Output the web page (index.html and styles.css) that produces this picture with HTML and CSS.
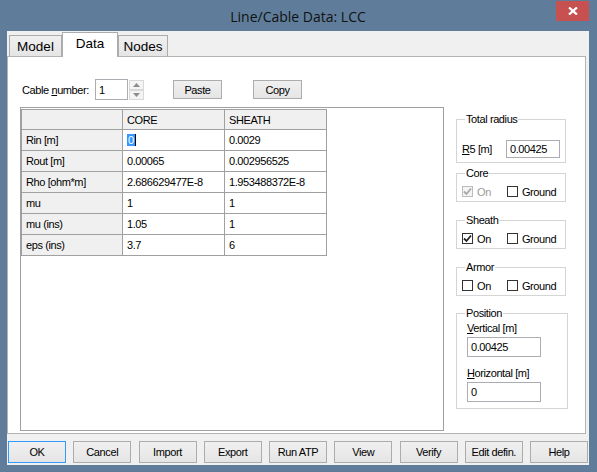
FILE: index.html
```html
<!DOCTYPE html>
<html lang="en">
<head>
    <meta charset="UTF-8">
    <title>Line/Cable Data: LCC</title>
    <link rel="stylesheet" href="styles.css">
</head>
<body>
<div class="window">
    <!-- Title bar -->
    <div class="titlebar">
        <span></span>
        <span class="title">Line/Cable Data: LCC</span>
        <button class="close-btn" aria-label="Close">
            <svg width="10" height="8" viewBox="0 0 10 8"><path d="M1 0.5 L9 7.5 M9 0.5 L1 7.5" stroke="#fff" stroke-width="2.3" fill="none"/></svg>
        </button>
    </div>

    <div class="client">
        <!-- Tabs -->
        <div class="tabs">
            <div class="tab tab-model">Model</div>
            <div class="tab tab-data active">Data</div>
            <div class="tab tab-nodes">Nodes</div>
        </div>

        <div class="tab-page">
            <div class="data-col">
                <div class="cable-row">
                    <span class="cable-label">Cable <u>n</u>umber:</span>
                    <input class="field spin-input" value="1">
                    <div class="spin-btns">
                        <span class="spin-btn"><svg width="7" height="4" viewBox="0 0 7 4"><path d="M3.5 0 L7 4 L0 4 Z" fill="#8c8c8c"/></svg></span>
                        <span class="spin-btn"><svg width="7" height="4" viewBox="0 0 7 4"><path d="M0 0 L7 0 L3.5 4 Z" fill="#8c8c8c"/></svg></span>
                    </div>
                    <button class="btn btn-paste">Paste</button>
                    <button class="btn btn-copy">Copy</button>
                </div>

                <div class="grid-frame">
                    <table class="grid">
                        <tr class="grid-head">
                            <th class="col-name"></th>
                            <th class="col-val">CORE</th>
                            <th class="col-val">SHEATH</th>
                        </tr>
                        <tr><th>Rin [m]</th><td><span class="sel">0</span></td><td>0.0029</td></tr>
                        <tr><th>Rout [m]</th><td>0.00065</td><td>0.002956525</td></tr>
                        <tr><th>Rho [ohm*m]</th><td>2.686629477E-8</td><td>1.953488372E-8</td></tr>
                        <tr><th>mu</th><td>1</td><td>1</td></tr>
                        <tr><th>mu (ins)</th><td>1.05</td><td>1</td></tr>
                        <tr><th>eps (ins)</th><td>3.7</td><td>6</td></tr>
                    </table>
                </div>
            </div>

            <div class="side-col">
                <fieldset class="group group-total">
                    <legend>Total radius</legend>
                    <div class="radius-row">
                        <span><u>R</u>5 [m]</span>
                        <input class="field radius-field" value="0.00425">
                    </div>
                </fieldset>

                <fieldset class="group group-core">
                    <legend>Core</legend>
                    <div class="check-row">
                        <span class="check disabled"><span class="box"><svg width="9" height="9" viewBox="0 0 9 9"><path d="M1 4.5 L3.5 7 L8 1.5" stroke="#a8a8a8" stroke-width="1.8" fill="none"/></svg></span>On</span>
                        <span class="check"><span class="box"></span>Ground</span>
                    </div>
                </fieldset>

                <fieldset class="group group-sheath">
                    <legend>Sheath</legend>
                    <div class="check-row">
                        <span class="check"><span class="box"><svg width="9" height="9" viewBox="0 0 9 9"><path d="M1 4.5 L3.5 7 L8 1.5" stroke="#222" stroke-width="1.8" fill="none"/></svg></span>On</span>
                        <span class="check"><span class="box"></span>Ground</span>
                    </div>
                </fieldset>

                <fieldset class="group group-armor">
                    <legend>Armor</legend>
                    <div class="check-row">
                        <span class="check"><span class="box"></span>On</span>
                        <span class="check"><span class="box"></span>Ground</span>
                    </div>
                </fieldset>

                <fieldset class="group group-position">
                    <legend>Position</legend>
                    <div class="pos-label"><u>V</u>ertical [m]</div>
                    <input class="field pos-field" value="0.00425">
                    <div class="pos-label pos-label-h"><u>H</u>orizontal [m]</div>
                    <input class="field pos-field" value="0">
                </fieldset>
            </div>
        </div>

        <!-- Dialog buttons -->
        <div class="button-bar">
            <button class="btn dlg-btn default">OK</button>
            <button class="btn dlg-btn">Cancel</button>
            <button class="btn dlg-btn">Import</button>
            <button class="btn dlg-btn">Export</button>
            <button class="btn dlg-btn">Run ATP</button>
            <button class="btn dlg-btn">View</button>
            <button class="btn dlg-btn">Verify</button>
            <button class="btn dlg-btn">Edit defin.</button>
            <button class="btn dlg-btn">Help</button>
        </div>
    </div>
</div>
</body>
</html>
```

FILE: styles.css
```css
body, html {
    margin: 0;
    padding: 0;
}

body {
    font-family: "Liberation Sans", Arial, sans-serif;
    font-size: 11px;
    letter-spacing: -0.4px;
    color: #000;
}

.window {
    width: 597px;
    height: 472px;
    box-sizing: border-box;
    padding: 0 8px 7px 7px;
    background-color: #5f7d9a;
    display: flex;
    flex-direction: column;
}

/* Title bar */
.titlebar {
    height: 31px;
    display: grid;
    grid-template-columns: 1fr auto 1fr;
    align-items: start;
}

.title {
    font-family: "Open Sans", "Noto Sans", sans-serif;
    font-size: 14px;
    letter-spacing: 0;
    line-height: 30px;
    padding-top: 2px;
    color: #111;
}

.close-btn {
    justify-self: end;
    margin-top: 1px;
    width: 33px;
    height: 20px;
    border: none;
    padding: 0;
    background-color: #c75050;
    display: flex;
    align-items: center;
    justify-content: center;
}

/* Client area */
.client {
    flex: 1;
    background-color: #f0f0f0;
    display: flex;
    flex-direction: column;
}

.tabs {
    height: 25px;
    box-sizing: border-box;
    display: flex;
    align-items: flex-end;
    padding-left: 2px;
    position: relative;
    z-index: 1;
}

.tab {
    height: 21px;
    box-sizing: border-box;
    border: 1px solid #acacac;
    border-bottom: none;
    background: linear-gradient(#f0f0f0, #e5e5e5);
    font-size: 13.5px;
    letter-spacing: 0;
    line-height: 21px;
    text-align: center;
}

.tab-model { width: 53px; }
.tab-data { width: 56px; }
.tab-nodes { width: 50px; }

.tab.active {
    height: 25px;
    margin-bottom: -1px;
    background: #fff;
    line-height: 22px;
}

.tab-page {
    width: 579px;
    height: 378px;
    box-sizing: border-box;
    border: 1px solid #b4b4b4;
    background-color: #fff;
    display: flex;
    align-items: flex-start;
    padding: 0 0 0 12px;
}

/* Left column with the grid */
.data-col {
    padding-top: 22px;
}

.cable-row {
    display: flex;
    align-items: center;
    height: 21px;
    padding-left: 2px;
}

.cable-label {
    width: 73px;
    white-space: nowrap;
}

.field {
    font: inherit;
    letter-spacing: inherit;
    box-sizing: border-box;
    border: 1px solid #abadb3;
    background: #fff;
    padding: 0 3px;
    outline: none;
    margin: 0;
}

.spin-input {
    width: 33px;
    height: 21px;
}

.spin-btns {
    display: flex;
    flex-direction: column;
    margin-left: 1px;
}

.spin-btn {
    width: 15px;
    height: 10px;
    box-sizing: border-box;
    border: 1px solid #d9d9d9;
    background: #f4f4f4;
    display: flex;
    align-items: center;
    justify-content: center;
}

.btn {
    font: inherit;
    letter-spacing: inherit;
    box-sizing: border-box;
    border: 1px solid #acacac;
    background: linear-gradient(#f0f0f0, #e5e5e5);
    padding: 0;
    margin: 0;
    color: #000;
}

.btn-paste {
    width: 49px;
    height: 19px;
    margin-left: 29px;
}

.btn-copy {
    width: 49px;
    height: 19px;
    margin-left: 31px;
}

.grid-frame {
    width: 424px;
    height: 324px;
    box-sizing: border-box;
    margin-top: 7px;
    border: 1px solid #a0a0a0;
    padding-top: 1px;
}

.grid {
    border-collapse: collapse;
    table-layout: fixed;
}

.grid th,
.grid td {
    border: 1px solid #a0a0a0;
    height: 21px;
    padding: 0 4px;
    text-align: left;
    font-weight: normal;
    white-space: nowrap;
    box-sizing: border-box;
}

.grid th {
    background-color: #f0f0f0;
}

.grid-head th {
    height: 20px;
}

.col-name { width: 101px; }
.col-val { width: 102px; }

.sel {
    background-color: #3399ff;
    color: #fff;
    padding: 0 1px;
    border-right: 1px solid #000;
}

/* Right column with group boxes */
.side-col {
    margin-left: 12px;
    padding-top: 55px;
    width: 112px;
}

.group {
    margin: 0;
    padding: 0 5px 3px 5px;
    border: 1px solid #d5d5d5;
    box-sizing: border-box;
    width: 110px;
}

.group legend {
    padding: 0 1px;
    margin-left: 3px;
    line-height: 14px;
}

.group-total { padding-top: 14px; padding-bottom: 4px; }
.group-core { margin-top: 3px; }
.group-sheath { margin-top: 11px; }
.group-armor { margin-top: 11px; }

.group-position {
    margin-top: 10px;
    width: 112px;
    padding: 0 5px 6px 10px;
}

.group-position legend {
    margin-left: -2px;
}

.radius-row {
    display: flex;
    align-items: center;
    justify-content: space-between;
}

.radius-field {
    width: 54px;
    height: 18px;
}

.check-row {
    display: flex;
    align-items: center;
    gap: 16px;
    padding-top: 5px;
    height: 13px;
}

.check {
    display: flex;
    align-items: center;
    gap: 4px;
}

.check .box {
    width: 11px;
    height: 11px;
    box-sizing: border-box;
    border: 1px solid #333;
    background: #fff;
    display: flex;
    align-items: center;
    justify-content: center;
}

.check.disabled {
    color: #9a9a9a;
}

.check.disabled .box {
    border-color: #bcbcbc;
    background: #f4f4f4;
}

.pos-label {
    line-height: 14px;
    padding-top: 1px;
}

.pos-label-h {
    padding-top: 9px;
}

.pos-field {
    width: 74px;
    height: 20px;
    margin-top: 2px;
}

/* Bottom buttons */
.button-bar {
    display: flex;
    justify-content: space-between;
    margin-top: 7px;
    padding: 0 1px 0 1px;
}

.dlg-btn {
    width: 58px;
    height: 22px;
}

.dlg-btn.default {
    border-color: #3399ff;
}
```
